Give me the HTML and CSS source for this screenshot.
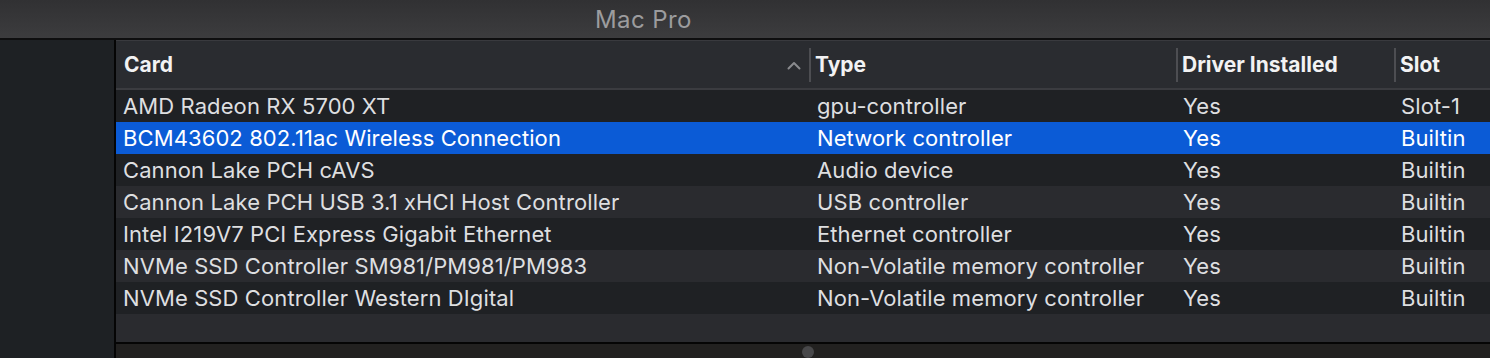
FILE: index.html
```html
<!DOCTYPE html>
<html lang="en">
<head>
  <meta charset="UTF-8" />
  <title>Mac Pro</title>
  <link rel="stylesheet" href="styles.css">
</head>
<body>

<!-- Title bar -->
<div class="titlebar">
  <div class="title">Mac Pro</div>
</div>

<div class="main">
  <!-- Sidebar -->
  <div class="sidebar"></div>

  <!-- PCI table -->
  <div class="panel">
    <div class="header">
      <div class="hcell first">
        <span>Card</span>
        <svg class="sort" width="14" height="9" viewBox="0 0 14 9">
          <path d="M1.5 7.5 L7 2 L12.5 7.5" fill="none" stroke="#8a8b8e" stroke-width="2" stroke-linecap="round" stroke-linejoin="round"/>
        </svg>
      </div>
      <div class="hcell">Type</div>
      <div class="hcell">Driver Installed</div>
      <div class="hcell">Slot</div>
    </div>

    <div class="rows">
      <div class="row">
        <div>AMD Radeon RX 5700 XT</div><div>gpu-controller</div><div>Yes</div><div>Slot-1</div>
      </div>
      <div class="row selected">
        <div>BCM43602 802.11ac Wireless Connection</div><div>Network controller</div><div>Yes</div><div>Builtin</div>
      </div>
      <div class="row">
        <div>Cannon Lake PCH cAVS</div><div>Audio device</div><div>Yes</div><div>Builtin</div>
      </div>
      <div class="row">
        <div>Cannon Lake PCH USB 3.1 xHCI Host Controller</div><div>USB controller</div><div>Yes</div><div>Builtin</div>
      </div>
      <div class="row">
        <div>Intel I219V7 PCI Express Gigabit Ethernet</div><div>Ethernet controller</div><div>Yes</div><div>Builtin</div>
      </div>
      <div class="row">
        <div>NVMe SSD Controller SM981/PM981/PM983</div><div>Non-Volatile memory controller</div><div>Yes</div><div>Builtin</div>
      </div>
      <div class="row">
        <div>NVMe SSD Controller Western DIgital</div><div>Non-Volatile memory controller</div><div>Yes</div><div>Builtin</div>
      </div>
      <div class="row empty"></div>
    </div>

    <div class="scrollbar">
      <span class="dot"></span>
    </div>
  </div>
</div>

</body>
</html>
```

FILE: styles.css
```css
* {
  margin: 0;
  padding: 0;
  box-sizing: border-box;
}

body {
  font-family: Inter, 'Liberation Sans', sans-serif;
  background: #1e2023;
  color: #dedfe0;
  width: 1490px;
  height: 358px;
  overflow: hidden;
  display: flex;
  flex-direction: column;
}

.titlebar {
  height: 40px;
  flex-shrink: 0;
  background: linear-gradient(#313133, #3c3c3e);
  border-bottom: 2px solid #0e0e0f;
  display: flex;
  align-items: center;
  padding-left: 595px;
}

.title {
  font-size: 24px;
  color: #9c9c9e;
  letter-spacing: 0.4px;
}

.main {
  flex: 1;
  display: flex;
  min-height: 0;
}

.sidebar {
  width: 116px;
  flex-shrink: 0;
  background: #1e2124;
  border-right: 2px solid #050505;
}

.panel {
  flex: 1;
  display: flex;
  flex-direction: column;
  min-width: 0;
}

.header,
.row {
  display: grid;
  grid-template-columns: 693px 367px 218px 1fr;
}

.header {
  height: 50px;
  background: #2a2c30;
  border-top: 1px solid #393a3e;
  border-bottom: 2px solid #3b3c40;
  align-items: center;
}

.hcell {
  height: 34px;
  display: flex;
  align-items: center;
  padding-left: 4px;
  border-left: 2px solid #4d4e52;
  font-weight: 700;
  font-size: 21px;
  color: #f2f2f3;
}

.hcell.first {
  border-left: none;
  padding-left: 8px;
  padding-right: 8px;
  justify-content: space-between;
}

.sort {
  margin-top: 1px;
}

.rows {
  flex: 1;
  overflow: hidden;
}

.row {
  height: 32px;
  align-items: center;
  font-size: 22px;
  letter-spacing: 0.1px;
  background: #1f2124;
  white-space: nowrap;
}

.row:nth-child(even) {
  background: #2a2b2f;
}

.row > div {
  padding-left: 7px;
}

.row > div:nth-child(2) {
  padding-left: 8px;
}

.row.selected {
  background: #0b5bd6;
  color: #ffffff;
}

.row.empty {
  height: 28px;
}

.scrollbar {
  height: 16px;
  flex-shrink: 0;
  background: #222120;
  border-top: 2px solid #050505;
  padding-left: 686px;
  padding-top: 2px;
}

.dot {
  display: block;
  width: 12px;
  height: 12px;
  border-radius: 50%;
  background: #48484a;
}
```
